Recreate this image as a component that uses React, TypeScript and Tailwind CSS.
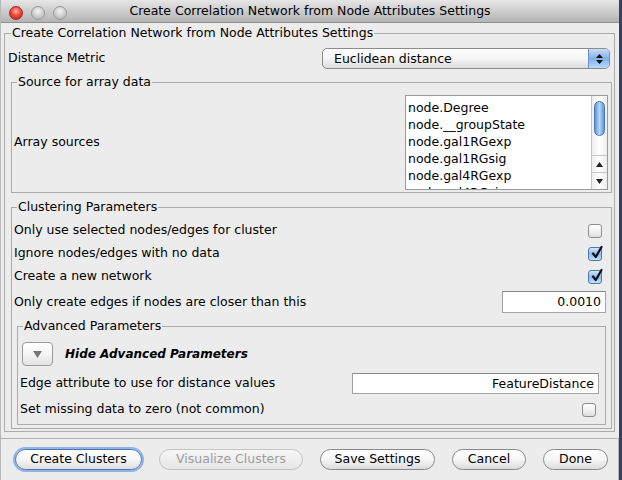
import type { ReactNode } from 'react'

const FONT = "font-['DejaVu_Sans',sans-serif] text-[12.5px] text-black"

function Group({ title, className, children }: { title: string; className: string; children: ReactNode }) {
  return (
    <fieldset className={`min-w-0 border border-[#ababab] ${className}`}>
      <legend className="ml-[3px] px-[1px] leading-[16px]">{title}</legend>
      {children}
    </fieldset>
  )
}

function CheckBox({ checked, className = '' }: { checked?: boolean; className?: string }) {
  if (checked) {
    return (
      <span
        className={`relative block h-[14px] w-[14px] rounded-[3px] border border-[#5078a8] bg-gradient-to-b from-[#d4e6fb] via-[#8ab8ee] to-[#c5e0fc] ${className}`}
      >
        <svg viewBox="0 0 14 14" className="absolute -top-[2px] left-[1px] h-[14px] w-[14px] overflow-visible">
          <path d="M3 7.5 L5.8 11 L11.5 1" fill="none" stroke="#111" strokeWidth="2.2" strokeLinecap="round" strokeLinejoin="round" />
        </svg>
      </span>
    )
  }
  return (
    <span
      className={`block h-[14px] w-[14px] rounded-[3px] border border-[#8e8e8e] bg-gradient-to-b from-white via-[#f2f2f2] to-[#dedede] ${className}`}
    />
  )
}

function PushButton({ label, width, focused, disabled }: { label: string; width: string; focused?: boolean; disabled?: boolean }) {
  const tone = disabled
    ? 'border-[#c2c2c2] text-[#9d9d9d] from-[#f6f6f6] to-[#e6e6e6]'
    : focused
      ? 'border-[#4f76ab] shadow-[0_0_0_2px_#8db4e8] from-white via-[#f6f6f6] to-[#dfdfdf]'
      : 'border-[#8a8a8a] from-white via-[#f6f6f6] to-[#dcdcdc]'
  return (
    <button
      type="button"
      className={`flex h-[21px] items-center justify-center rounded-full border bg-gradient-to-b leading-none ${width} ${tone}`}
    >
      {label}
    </button>
  )
}

const items = ['node.Degree', 'node.__groupState', 'node.gal1RGexp', 'node.gal1RGsig', 'node.gal4RGexp', 'node.gal4RGsig']

export default function App() {
  return (
    <div className={`flex h-[480px] w-[622px] overflow-hidden bg-[#2e4366] ${FONT}`}>
      <div className="flex w-[619px] flex-col border-l border-[#b9b9b9] bg-[#ececec]">
        <div className="relative flex h-[23px] shrink-0 items-center justify-center border-b border-[#8f8f8f] bg-gradient-to-b from-[#e6e6e6] to-[#b4b4b4]">
          <div className="absolute left-[8px] top-[6px] flex gap-[8px]">
            <span className="block h-[14px] w-[14px] rounded-full border border-[#9c2a22] bg-[radial-gradient(circle_at_50%_35%,#ffb3a8_0%,#f24a3b_45%,#b3231a_100%)]" />
            <span className="block h-[14px] w-[14px] rounded-full border border-[#9a9a9a] bg-[radial-gradient(circle_at_50%_35%,#f4f4f4_0%,#cfcfcf_50%,#a9a9a9_100%)]" />
            <span className="block h-[14px] w-[14px] rounded-full border border-[#9a9a9a] bg-[radial-gradient(circle_at_50%_35%,#f4f4f4_0%,#cfcfcf_50%,#a9a9a9_100%)]" />
          </div>
          <span className="leading-none">Create Correlation Network from Node Attributes Settings</span>
        </div>

        <Group title="Create Correlation Network from Node Attributes Settings" className="mx-[3px] mt-[2px] pl-[3px] pr-[2px] pt-[7px] pb-[2px] mr-[4px]">
          <div className="flex h-[21px] items-center justify-between">
            <span>Distance Metric</span>
            <div className="mr-[2px] flex h-[21px] w-[288px] overflow-hidden rounded-[5px] border border-[#8c8c8c] bg-gradient-to-b from-white via-[#f5f5f5] to-[#dcdcdc]">
              <span className="flex-1 pl-[11px] leading-[19px]">Euclidean distance</span>
              <span className="flex w-[21px] flex-col items-center justify-center gap-[2px] border-l border-[#6d8fbf] bg-gradient-to-b from-[#c9def8] via-[#7fb0ea] to-[#b9d9fb]">
                <svg viewBox="0 0 7 4" className="h-[4px] w-[7px]"><path d="M3.5 0 L7 4 L0 4 Z" fill="#111" /></svg>
                <svg viewBox="0 0 7 4" className="h-[4px] w-[7px]"><path d="M0 0 L7 0 L3.5 4 Z" fill="#111" /></svg>
              </span>
            </div>
          </div>

          <Group title="Source for array data" className="ml-[3px] mt-[5px] pl-[2px] pr-[3px] pt-[5px] pb-[2px]">
            <div className="flex items-center justify-between">
              <span>Array sources</span>
              <div className="flex h-[95px] w-[203px] overflow-hidden border border-[#9a9a9a] bg-white">
                <ul className="flex-1 overflow-hidden pl-[2px] pt-[3px]">
                  {items.map((it) => (
                    <li key={it} className="h-[17px] whitespace-nowrap leading-[17px]">
                      {it}
                    </li>
                  ))}
                </ul>
                <div className="flex w-[16px] flex-col border-l border-[#c4c4c4] bg-gradient-to-r from-[#eeeeee] via-white to-[#eeeeee]">
                  <div className="flex-1 px-[2px] pt-[5px]">
                    <div className="h-[35px] rounded-full border border-[#4a78b4] bg-gradient-to-r from-[#5d93dc] via-[#b8d6fa] to-[#5d93dc]" />
                  </div>
                  <div className="flex h-[17px] items-center justify-center border-t border-[#c4c4c4]">
                    <svg viewBox="0 0 7 5" className="h-[5px] w-[7px]"><path d="M3.5 0 L7 5 L0 5 Z" fill="#222" /></svg>
                  </div>
                  <div className="flex h-[17px] items-center justify-center border-t border-[#c4c4c4]">
                    <svg viewBox="0 0 7 5" className="h-[5px] w-[7px]"><path d="M0 0 L7 0 L3.5 5 Z" fill="#222" /></svg>
                  </div>
                </div>
              </div>
            </div>
          </Group>

          <Group title="Clustering Parameters" className="ml-[3px] mt-[6px] pl-[2px] pr-[5px] pt-[4px] pb-[3px]">
            <div className="flex h-[23px] items-center justify-between">
              <span>Only use selected nodes/edges for cluster</span>
              <CheckBox className="mr-[4px]" />
            </div>
            <div className="flex h-[23px] items-center justify-between">
              <span>Ignore nodes/edges with no data</span>
              <CheckBox checked className="mr-[4px]" />
            </div>
            <div className="flex h-[23px] items-center justify-between">
              <span>Create a new network</span>
              <CheckBox checked className="mr-[4px]" />
            </div>
            <div className="mt-[3px] flex h-[22px] items-center justify-between">
              <span>Only create edges if nodes are closer than this</span>
              <div className="h-[22px] w-[104px] border border-[#a4a4a4] border-t-[#8a8a8a] bg-white pr-[4px] text-right leading-[20px]">0.0010</div>
            </div>

            <Group title="Advanced Parameters" className="ml-[3px] mt-[5px] pl-[2px] pr-[6px] pt-[8px] pb-[2px]">
              <div className="flex h-[24px] items-center">
                <span className="ml-[2px] flex h-[24px] w-[31px] items-center justify-center rounded-[4px] border border-[#9b9b9b] bg-gradient-to-b from-white via-[#f5f5f5] to-[#e2e2e2]">
                  <svg viewBox="0 0 9 7" className="h-[7px] w-[9px]"><path d="M0 0 L9 0 L4.5 7 Z" fill="#777" /></svg>
                </span>
                <span className="ml-[12px] text-[12px] font-bold italic">Hide Advanced Parameters</span>
              </div>
              <div className="mt-[7px] flex h-[21px] items-center justify-between">
                <span>Edge attribute to use for distance values</span>
                <div className="h-[21px] w-[247px] border border-[#a4a4a4] border-t-[#8a8a8a] bg-white pr-[4px] text-right leading-[19px]">FeatureDistance</div>
              </div>
              <div className="mt-[3px] flex h-[25px] items-center justify-between">
                <span>Set missing data to zero (not common)</span>
                <CheckBox className="mr-[3px]" />
              </div>
            </Group>
          </Group>
        </Group>

        <div className="mt-[6px] flex flex-1 items-start gap-[17px] border-t border-r border-[#b4b4b4] pl-[14px] pt-[10px]">
          <PushButton label="Create Clusters" width="w-[127px]" focused />
          <PushButton label="Visualize Clusters" width="w-[144px]" disabled />
          <PushButton label="Save Settings" width="w-[115px]" />
          <PushButton label="Cancel" width="w-[74px]" />
          <PushButton label="Done" width="w-[65px]" />
        </div>
      </div>
    </div>
  )
}
